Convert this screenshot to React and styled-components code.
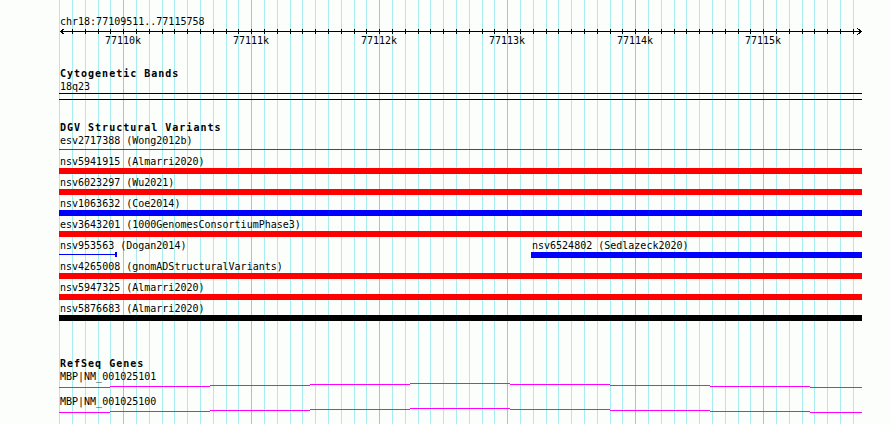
import React from "react";
import styled, { createGlobalStyle } from "styled-components";

const BG = "#fcfefc";
const MINOR = "#a8ecf0";
const MAJOR = "#8ecaea";
const ORIGIN = 59; // left edge of the track panel, page px

const gridLines = Array.from({ length: 63 }, (_, k) => ({
  x: Math.round(59.2 + 12.8 * k),
  major: k % 10 === 5,
}));
const gridImage = gridLines
  .map((g) => {
    const c = g.major ? MAJOR : MINOR;
    return `linear-gradient(${c}, ${c})`;
  })
  .join(", ");
const gridPos = gridLines.map((g) => `${g.x}px 0`).join(", ");

const majorTicks = [
  { x: 123, label: "77110k" },
  { x: 251, label: "77111k" },
  { x: 379, label: "77112k" },
  { x: 507, label: "77113k" },
  { x: 635, label: "77114k" },
  { x: 763, label: "77115k" },
];

const dgvRows = [
  [{ label: "esv2717388 (Wong2012b)", left: 0, width: 803, kind: "line", color: "#ff0000" }],
  [{ label: "nsv5941915 (Almarri2020)", left: 0, width: 803, kind: "bar", color: "#ff0000" }],
  [{ label: "nsv6023297 (Wu2021)", left: 0, width: 803, kind: "bar", color: "#ff0000" }],
  [{ label: "nsv1063632 (Coe2014)", left: 0, width: 803, kind: "bar", color: "#0000ff" }],
  [{ label: "esv3643201 (1000GenomesConsortiumPhase3)", left: 0, width: 803, kind: "bar", color: "#ff0000" }],
  [
    { label: "nsv953563 (Dogan2014)", left: 0, width: 57, kind: "capped", color: "#0000ff" },
    { label: "nsv6524802 (Sedlazeck2020)", left: 472, width: 331, kind: "bar", color: "#0000ff" },
  ],
  [{ label: "nsv4265008 (gnomADStructuralVariants)", left: 0, width: 803, kind: "bar", color: "#ff0000" }],
  [{ label: "nsv5947325 (Almarri2020)", left: 0, width: 803, kind: "bar", color: "#ff0000" }],
  [{ label: "nsv5876683 (Almarri2020)", left: 0, width: 803, kind: "bar", color: "#000000" }],
];

// transcript drawn as stepped 1px segments (page x ranges, row offset from top)
const geneSteps = [
  [59, 110, 4],
  [110, 210, 3],
  [210, 310, 2],
  [310, 410, 1],
  [410, 510, 0],
  [510, 610, 1],
  [610, 710, 2],
  [710, 810, 3],
  [810, 862, 4],
];
const genes = ["MBP|NM_001025101", "MBP|NM_001025100"];

const GlobalStyle = createGlobalStyle`
  html, body { margin: 0; padding: 0; background: ${BG}; }
  #root { width: 890px; height: 424px; }
`;

const Canvas = styled.div`
  box-sizing: border-box;
  width: 890px;
  height: 424px;
  overflow: hidden;
  padding: 15px 0 0 ${ORIGIN}px;
  background-color: ${BG};
  background-image: ${gridImage};
  background-position: ${gridPos};
  background-size: 1px 100%;
  background-repeat: no-repeat;
  font-family: "DejaVu Sans Mono", "Liberation Mono", monospace;
  font-size: 10px;
  line-height: 13px;
  color: #000;
`;

const Panel = styled.div`
  width: 803px;
  display: flex;
  flex-direction: column;
`;

const TextLine = styled.div`
  height: 13px;
  padding-left: 1px;
  white-space: pre;
`;

const TrackTitle = styled.div`
  height: 13px;
  margin-top: ${(p) => p.$gap}px;
  padding-left: 1px;
  font-weight: bold;
  letter-spacing: 1px;
  white-space: pre;
`;

const RulerSvg = styled.svg`
  display: block;
  width: 803px;
  height: 18px;
  overflow: visible;
`;

const Band = styled.div`
  height: 5px;
  border-top: 1px solid #000;
  border-bottom: 1px solid #000;
`;

const FeatureRow = styled.div`
  display: flex;
  flex-direction: column;
  height: 21px;
`;

const LabelLine = styled.div`
  position: relative;
  height: 13px;
`;

const FeatureLabel = styled.span`
  position: absolute;
  top: 0;
  left: ${(p) => p.$left + 1}px;
  white-space: pre;
`;

const Lane = styled.div`
  position: relative;
  height: 8px;
`;

const Glyph = styled.div`
  position: absolute;
  left: ${(p) => p.$left}px;
  width: ${(p) => p.$width}px;
  top: ${(p) => (p.$kind === "bar" ? 0 : 2)}px;
  height: ${(p) => (p.$kind === "bar" ? 6 : 1)}px;
  background: ${(p) => p.$color};
`;

const EndCap = styled.div`
  position: absolute;
  left: ${(p) => p.$left}px;
  top: 0;
  width: 2px;
  height: 5px;
  background: ${(p) => p.$color};
`;

const GeneBlock = styled.div`
  display: flex;
  flex-direction: column;
  height: 25px;
`;

const GeneSvg = styled.svg`
  display: block;
  width: 803px;
  height: 12px;
`;

function Ruler() {
  return (
    <RulerSvg viewBox="0 0 803 18" shapeRendering="crispEdges">
      <rect x="1" y="3" width="802" height="1" fill="#000" />
      {gridLines.slice(1).map((g) => (
        <rect key={g.x} x={g.x - ORIGIN} y="1" width="1" height="5" fill="#000" />
      ))}
      <polyline points="5.5,0.5 1.5,3.5 5.5,6.5" fill="none" stroke="#000" strokeWidth="1" />
      <polyline points="798.5,0.5 802.5,3.5 798.5,6.5" fill="none" stroke="#000" strokeWidth="1" />
      {majorTicks.map((t) => (
        <text
          key={t.label}
          x={t.x - ORIGIN}
          y="16"
          textAnchor="middle"
          fontFamily='"DejaVu Sans Mono", monospace'
          fontSize="10"
          fill="#000"
        >
          {t.label}
        </text>
      ))}
    </RulerSvg>
  );
}

function Row({ features }) {
  return (
    <FeatureRow>
      <LabelLine>
        {features.map((f) => (
          <FeatureLabel key={f.label} $left={f.left}>
            {f.label}
          </FeatureLabel>
        ))}
      </LabelLine>
      <Lane>
        {features.map((f) => (
          <React.Fragment key={f.label}>
            <Glyph $left={f.left} $width={f.width} $kind={f.kind} $color={f.color} />
            {f.kind === "capped" && <EndCap $left={f.left + f.width - 1} $color={f.color} />}
          </React.Fragment>
        ))}
      </Lane>
    </FeatureRow>
  );
}

function Gene({ name }) {
  return (
    <GeneBlock>
      <TextLine>{name}</TextLine>
      <GeneSvg viewBox="0 0 803 12" shapeRendering="crispEdges">
        {geneSteps.map(([x0, x1, y]) => (
          <rect key={x0} x={x0 - ORIGIN} y={y} width={x1 - x0} height="1" fill="#ff00ff" />
        ))}
      </GeneSvg>
    </GeneBlock>
  );
}

export default function App() {
  return (
    <>
      <GlobalStyle />
      <Canvas>
        <Panel>
          <TextLine>chr18:77109511..77115758</TextLine>
          <Ruler />

          <TrackTitle $gap={21}>Cytogenetic Bands</TrackTitle>
          <TextLine>18q23</TextLine>
          <Band />

          <TrackTitle $gap={21}>DGV Structural Variants</TrackTitle>
          {dgvRows.map((features, i) => (
            <Row key={i} features={features} />
          ))}

          <TrackTitle $gap={34}>RefSeq Genes</TrackTitle>
          {genes.map((g) => (
            <Gene key={g} name={g} />
          ))}
        </Panel>
      </Canvas>
    </>
  );
}
